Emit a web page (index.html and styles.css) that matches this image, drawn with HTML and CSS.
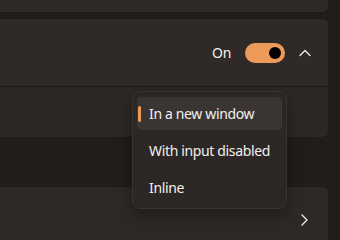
FILE: index.html
```html
<!DOCTYPE html>
<html>
<head>
<meta charset="utf-8">
<link rel="stylesheet" href="styles.css">
</head>
<body>
<div class="page">
  <div class="card card-top"></div>
  <div class="expander">
    <div class="exp-header">
      <span class="state">On</span>
      <div class="toggle"><div class="knob"></div></div>
      <div class="chev-btn">
        <svg width="12" height="8" viewBox="0 0 12 8"><path d="M1 6.5 L6 1.5 L11 6.5" fill="none" stroke="#f2f0ee" stroke-width="1.3" stroke-linecap="round" stroke-linejoin="round"/></svg>
      </div>
    </div>
    <div class="exp-content"></div>
  </div>
  <div class="card card-bottom">
    <div class="chev-btn">
      <svg width="8" height="12" viewBox="0 0 8 12"><path d="M2 1 L7 6 L2 11" fill="none" stroke="#f2f0ee" stroke-width="1.3" stroke-linecap="round" stroke-linejoin="round"/></svg>
    </div>
  </div>
</div>
<div class="menu">
  <div class="item selected"><span class="indicator"></span>In a new window</div>
  <div class="item">With input disabled</div>
  <div class="item">Inline</div>
</div>
</body>
</html>
```
FILE: styles.css
```css
html, body {
  margin: 0;
  padding: 0;
  background: #221d1a;
  width: 340px;
  height: 240px;
  overflow: hidden;
  font-family: "Noto Sans", "Open Sans", sans-serif;
  color: #f2f0ee;
}
.page {
  width: 329px;
  display: flex;
  flex-direction: column;
}
.card {
  background: #2e2926;
  border: 1px solid #1f1b18;
  border-left: none;
  box-sizing: border-box;
}
.card-top {
  height: 13px;
  border-top: none;
  border-radius: 0 0 6px 0;
}
.expander {
  margin-top: 5px;
  background: #2e2926;
  border: 1px solid #1f1b18;
  border-left: none;
  border-radius: 0 6px 6px 0;
  display: flex;
  flex-direction: column;
}
.exp-header {
  height: 67px;
  display: flex;
  align-items: center;
  justify-content: flex-end;
  padding-right: 7px;
  border-bottom: 1px solid #1e1a17;
  background: #2f2a27;
  border-radius: 0 6px 0 0;
}
.state {
  font-size: 14px;
  letter-spacing: -0.3px;
  margin-right: 14px;
}
.toggle {
  width: 40px;
  height: 20px;
  border-radius: 10px;
  background: #ed9a59;
  display: flex;
  align-items: center;
  justify-content: flex-end;
  padding-right: 4px;
  box-sizing: border-box;
  margin-right: 4px;
}
.knob {
  width: 12px;
  height: 12px;
  border-radius: 50%;
  background: #000;
}
.chev-btn {
  width: 32px;
  height: 32px;
  display: flex;
  align-items: center;
  justify-content: center;
}
.exp-content {
  height: 50px;
  background: #2d2825;
  border-radius: 0 0 6px 0;
}
.card-bottom {
  margin-top: 48px;
  height: 54px;
  border-bottom: none;
  border-radius: 0 6px 0 0;
  display: flex;
  justify-content: flex-end;
  padding: 17px 8px 0 0;
}
.menu {
  position: absolute;
  left: 132px;
  top: 91px;
  width: 155px;
  box-sizing: border-box;
  padding: 5px 4px 4px 4px;
  background: #2c2724;
  border: 1px solid #3a3431;
  border-radius: 8px;
  box-shadow: 0 6px 16px rgba(0,0,0,0.35);
  display: flex;
  flex-direction: column;
  gap: 4px;
}
.item {
  position: relative;
  height: 33px;
  display: flex;
  align-items: center;
  padding-left: 12px;
  font-size: 14px;
  letter-spacing: -0.35px;
  border-radius: 4px;
  white-space: nowrap;
}
.item.selected {
  background: #3a3532;
}
.indicator {
  position: absolute;
  left: 1px;
  top: 8.5px;
  width: 3px;
  height: 16px;
  border-radius: 2px;
  background: #ed9a59;
}
```
